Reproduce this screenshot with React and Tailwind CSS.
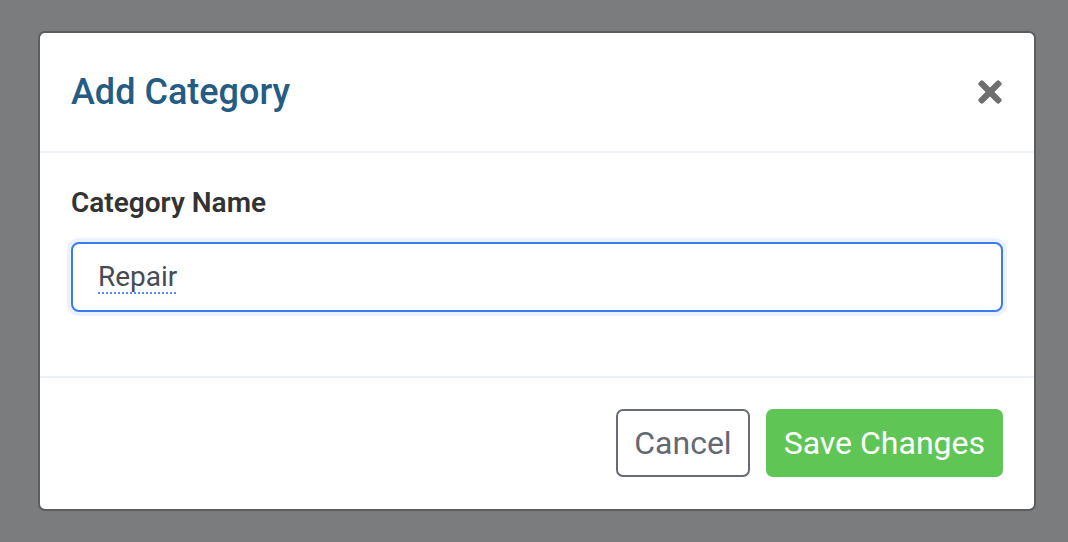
import { FaTimes } from "react-icons/fa";

export default function App() {
  return (
    <div className="h-[542px] w-[1068px] overflow-hidden bg-[#7b7c7e] pl-[38px] pt-[31px] font-['Roboto',sans-serif]">
      <div className="w-[998px] rounded-[7px] border-2 border-[#5c5d5f] bg-white">
        <div className="flex h-[120px] items-center justify-between border-b-2 border-[#edf1f5] pl-[31px] pr-[32px]">
          <h2 className="text-[36px] font-medium leading-[40px] text-[#245c84]">Add Category</h2>
          <button className="text-[#6e6e6e]">
            <FaTimes className="h-[34px] w-[24px]" />
          </button>
        </div>
        <div className="h-[225px] border-b-2 border-[#edf1f5] px-[31px] pt-[34px]">
          <label className="block text-[28px] font-semibold leading-[32px] text-[#333]">Category Name</label>
          <div className="-mx-[4px] mt-[19px] rounded-[12px] bg-[#ebf1fd] p-[4px]">
            <div className="flex h-[70px] items-center rounded-[8px] border-2 border-[#3a7bf0] bg-white px-[25px]">
              <span className="text-[28px] text-[#454b55] underline decoration-[#5b8ef5] decoration-dotted decoration-2 underline-offset-[6px]">
                Repair
              </span>
            </div>
          </div>
        </div>
        <div className="flex h-[131px] items-center justify-end gap-[16px] px-[31px] pb-[2px]">
          <button className="h-[68px] rounded-[7px] border-2 border-[#676b75] px-[16px] text-[32px] text-[#646873]">
            Cancel
          </button>
          <button className="h-[68px] rounded-[7px] bg-[#5fc656] px-[18px] text-[32px] text-white">
            Save Changes
          </button>
        </div>
      </div>
    </div>
  );
}
